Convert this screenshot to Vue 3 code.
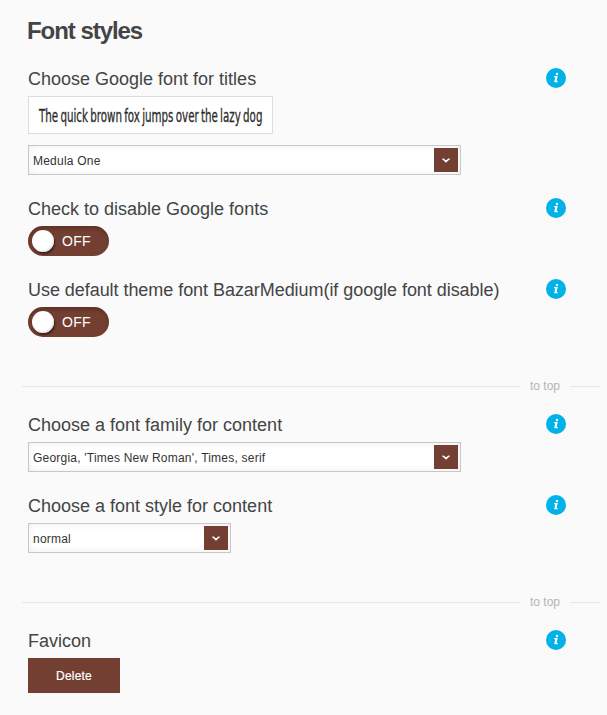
<script setup>
import { ref } from 'vue'

const sections = ref([
  {
    id: 'titles',
    toTop: true,
    fields: [
      { type: 'font', label: 'Choose Google font for titles', value: 'Medula One', preview: 'The quick brown fox jumps over the lazy dog' },
      { type: 'toggle', label: 'Check to disable Google fonts' },
      { type: 'toggle', label: 'Use default theme font BazarMedium(if google font disable)', tight: true },
    ],
  },
  {
    id: 'content',
    toTop: true,
    fields: [
      { type: 'select', label: 'Choose a font family for content', value: "Georgia, 'Times New Roman', Times, serif" },
      { type: 'select', label: 'Choose a font style for content', value: 'normal', short: true },
    ],
  },
  {
    id: 'favicon',
    fields: [{ type: 'button', label: 'Favicon', value: 'Delete' }],
  },
])
</script>

<template>
  <main class="page">
    <h1>Font styles</h1>
    <template v-for="section in sections" :key="section.id">
      <section class="section">
        <div v-for="field in section.fields" :key="field.label" class="field">
          <div class="head">
            <span class="label" :class="{ tight: field.tight }">{{ field.label }}</span>
            <svg class="info" viewBox="0 0 20 20" width="20" height="20">
              <circle cx="10" cy="10" r="10" fill="#00b2e8" />
              <circle cx="11" cy="6" r="1.25" fill="#fff" />
              <path d="M8.1 8H11.7L10.6 12.9H11.7V14.2H8.2L9.3 9.3H8.1Z" fill="#fff" />
            </svg>
          </div>
          <div v-if="field.preview" class="preview">
            <span class="sample">{{ field.preview }}</span>
          </div>
          <div v-if="field.type === 'font' || field.type === 'select'" class="select" :class="{ short: field.short }">
            <span class="value">{{ field.value }}</span>
            <div class="arrow">
              <svg viewBox="0 0 24 24" width="24" height="24">
                <path d="M8.4 11.2H9.4L12 13.6L14.6 11.2H15.6" fill="none" stroke="#fff" stroke-width="1.6" />
              </svg>
            </div>
          </div>
          <div v-else-if="field.type === 'toggle'" class="toggle">
            <i class="knob"></i>
            <span>OFF</span>
          </div>
          <button v-else class="button">{{ field.value }}</button>
        </div>
      </section>
      <div v-if="section.toTop" class="divider"><span>to top</span></div>
    </template>
  </main>
</template>

<style>
body {
  background: #fafafa;
}
</style>

<style scoped>
.page {
  box-sizing: border-box;
  width: 607px;
  height: 715px;
  padding: 16px 7px 0 22px;
  overflow: hidden;
  background: #fafafa;
  color: #444;
  font-family: "Liberation Sans", Arial, sans-serif;
}
h1 {
  margin: 0 0 22px 5px;
  font-size: 24px;
  line-height: 30px;
  letter-spacing: -1.05px;
}
.section {
  display: flex;
  flex-direction: column;
  gap: 23px;
  padding-left: 6px;
}
.field {
  display: flex;
  flex-direction: column;
  align-items: flex-start;
}
.head {
  display: flex;
  justify-content: space-between;
  width: 538px;
  height: 20px;
  margin-bottom: 8px;
}
.label {
  font-size: 18px;
  line-height: 23px;
  white-space: nowrap;
}
.tight {
  letter-spacing: -0.05px;
}
.preview {
  box-sizing: border-box;
  width: 245px;
  height: 38px;
  margin-bottom: 11px;
  padding-left: 10px;
  border: 1px solid #ddd;
  background: #fff;
}
.sample {
  display: inline-block;
  color: #2a2a2a;
  font-family: "DejaVu Sans Condensed", "DejaVu Sans", sans-serif;
  font-stretch: condensed;
  font-size: 18px;
  line-height: 37px;
  white-space: nowrap;
  word-spacing: -1.6px;
  -webkit-text-stroke: 0.3px #2a2a2a;
  transform: scaleX(0.636);
  transform-origin: left;
}
.select {
  box-sizing: border-box;
  display: flex;
  align-items: center;
  justify-content: space-between;
  width: 433px;
  height: 30px;
  padding: 0 2px 0 4px;
  border: 1px solid #c8c8c8;
  background: #fff;
  box-shadow: inset 0 0 7px #ececec;
  color: #333;
  font-size: 12px;
  letter-spacing: 0.22px;
}
.value {
  padding-top: 2px;
}
.short {
  width: 203px;
}
.arrow {
  width: 24px;
  height: 24px;
  background: #723f32;
}
.arrow svg,
.info {
  display: block;
}
.toggle {
  box-sizing: border-box;
  display: flex;
  align-items: center;
  gap: 8px;
  width: 81px;
  height: 30px;
  padding-left: 4px;
  border-radius: 15px;
  background: #723f32;
  box-shadow: inset 0 3px 3px rgba(60, 25, 18, 0.3);
  color: #fff;
  font-size: 14px;
  letter-spacing: 0.3px;
}
.knob {
  width: 22px;
  height: 22px;
  border-radius: 50%;
  background: #fff;
  box-shadow: 1px 2px 2px rgba(0, 0, 0, 0.5), inset -1px -1px 2px #ddd;
}
.divider {
  display: flex;
  align-items: center;
  height: 20px;
  margin: 39px 0 18px;
  color: #b5b5b5;
  font-size: 12px;
}
.divider::before,
.divider::after {
  content: '';
  height: 1px;
  background: #e8e8e8;
}
.divider::before {
  width: 498px;
}
.divider::after {
  width: 30px;
}
.divider span {
  width: 50px;
  text-align: center;
}
.button {
  width: 92px;
  height: 35px;
  padding: 0;
  border: 0;
  background: #723f32;
  color: #fff;
  font-family: inherit;
  font-size: 12px;
  letter-spacing: 0.2px;
  -webkit-text-stroke: 0.2px #fff;
}
</style>
